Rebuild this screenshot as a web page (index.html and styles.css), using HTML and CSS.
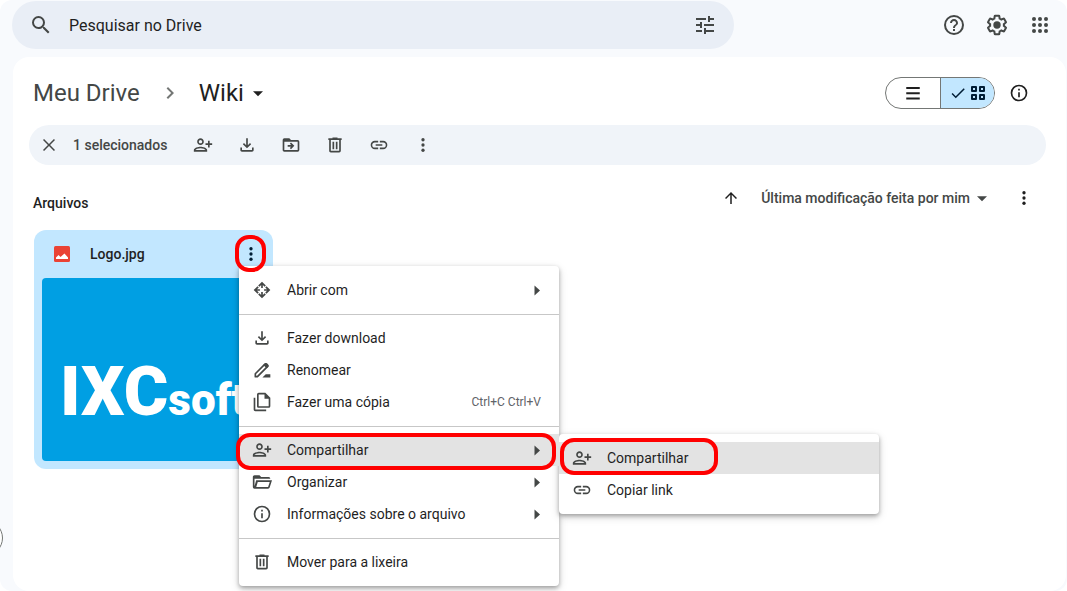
FILE: index.html
```html
<!DOCTYPE html>
<html lang="pt-BR">
<head>
<meta charset="utf-8">
<meta name="viewport" content="width=device-width, initial-scale=1">
<title>Wiki - Google Drive</title>
<link rel="stylesheet" href="styles.css">
</head>
<body>
<svg class="sprite" aria-hidden="true">
  <symbol id="search" viewBox="0 0 24 24"><path d="M15.5 14h-.79l-.28-.27A6.47 6.47 0 0 0 16 9.5 6.5 6.5 0 1 0 9.5 16c1.61 0 3.09-.59 4.23-1.57l.27.28v.79l5 4.99L20.49 19l-4.99-5zm-6 0a4.5 4.5 0 1 1 0-9 4.5 4.5 0 0 1 0 9z"/></symbol>
  <symbol id="tune" viewBox="0 0 24 24"><path d="M3 17v2h6v-2H3zM3 5v2h10V5H3zm10 16v-2h8v-2h-8v-2h-2v6h2zM7 9v2H3v2h4v2h2V9H7zm14 4v-2H11v2h10zm-6-4h2V7h4V5h-4V3h-2v6z"/></symbol>
  <symbol id="help" viewBox="0 0 24 24"><path d="M11 18h2v-2h-2v2zm1-16a10 10 0 1 0 0 20 10 10 0 0 0 0-20zm0 18a8 8 0 1 1 0-16 8 8 0 0 1 0 16zm0-14c-2.21 0-4 1.79-4 4h2c0-1.1.9-2 2-2s2 .9 2 2c0 2-3 1.75-3 5h2c0-2.25 3-2.5 3-5 0-2.21-1.79-4-4-4z"/></symbol>
  <symbol id="gear" viewBox="-1 -1 26 26"><path fill="none" stroke="currentColor" stroke-width="2.2" d="M19.43 12.98c.04-.32.07-.64.07-.98 0-.34-.03-.66-.07-.98l2.11-1.65c.19-.15.24-.42.12-.64l-2-3.46a.5.5 0 0 0-.61-.22l-2.49 1c-.52-.4-1.08-.73-1.69-.98l-.38-2.65C14.46 2.18 14.25 2 14 2h-4c-.25 0-.46.18-.49.42l-.38 2.65c-.61.25-1.17.59-1.69.98l-2.49-1c-.23-.09-.49 0-.61.22l-2 3.46c-.13.22-.07.49.12.64l2.11 1.65c-.04.32-.07.65-.07.98s.03.66.07.98l-2.11 1.65c-.19.15-.24.42-.12.64l2 3.46c.12.22.39.3.61.22l2.49-1c.52.4 1.08.73 1.69.98l.38 2.65c.03.24.24.42.49.42h4c.25 0 .46-.18.49-.42l.38-2.65c.61-.25 1.17-.59 1.69-.98l2.49 1c.23.09.49 0 .61-.22l2-3.46c.12-.22.07-.49-.12-.64l-2.11-1.65z"/><circle cx="12" cy="12" r="4"/></symbol>
  <symbol id="apps" viewBox="0 0 24 24"><circle cx="6" cy="6" r="2"/><circle cx="12" cy="6" r="2"/><circle cx="18" cy="6" r="2"/><circle cx="6" cy="12" r="2"/><circle cx="12" cy="12" r="2"/><circle cx="18" cy="12" r="2"/><circle cx="6" cy="18" r="2"/><circle cx="12" cy="18" r="2"/><circle cx="18" cy="18" r="2"/></symbol>
  <symbol id="chevron" viewBox="0 0 24 24"><path d="M10 6 8.59 7.41 13.17 12l-4.58 4.59L10 18l6-6z"/></symbol>
  <symbol id="caret" viewBox="0 0 24 24"><path d="m6 10 6 6 6-6z"/></symbol>
  <symbol id="side" viewBox="0 0 16 16"><path d="M5.500 3.500v10l5.500-5z"/></symbol>
  <symbol id="list" viewBox="0 0 24 24"><path d="M3 4h18v2.5H3zM3 11h18v2.5H3zM3 18h18v2.5H3z"/></symbol>
  <symbol id="check" viewBox="0 0 24 24"><path d="M9 16.2 4.8 12l-1.4 1.4L9 19 21 7l-1.400-1.400z"/></symbol>
  <symbol id="grid" viewBox="0 0 16 16"><path fill="none" stroke="currentColor" stroke-width="2" stroke-linejoin="round" d="M2 2h4v4H2zM10 2h4v4h-4zM2 10h4v4H2zM10 10h4v4h-4z"/></symbol>
  <symbol id="info" viewBox="0 0 24 24"><path d="M11 7h2v2h-2zm0 4h2v6h-2zm1-9a10 10 0 1 0 0 20 10 10 0 0 0 0-20zm0 18a8 8 0 1 1 0-16 8 8 0 0 1 0 16z"/></symbol>
  <symbol id="close" viewBox="0 0 24 24"><path d="M20 5.400 18.600 4 12 10.600 5.400 4 4 5.400l6.600 6.600L4 18.600 5.400 20l6.600-6.600 6.600 6.600 1.400-1.400-6.600-6.600z"/></symbol>
  <symbol id="person" viewBox="0 0 24 24"><path d="M13 8c0-2.21-1.79-4-4-4S5 5.790 5 8s1.790 4 4 4 4-1.790 4-4zm-2 0c0 1.100-.9 2-2 2s-2-.9-2-2 .9-2 2-2 2 .9 2 2zM1 18v2h16v-2c0-2.660-5.330-4-8-4s-8 1.340-8 4zm2 0c.2-.71 3.300-2 6-2 2.690 0 5.780 1.280 6 2H3zm17-3v-3h3v-2h-3V7h-2v3h-3v2h3v3h2z"/></symbol>
  <symbol id="download" viewBox="0 0 24 24"><path d="m12 16-5-5 1.400-1.450 2.600 2.600V4h2v8.150l2.600-2.600L17 11zM6 20c-1.100 0-2-.9-2-2v-3h2v3h12v-3h2v3c0 1.100-.9 2-2 2z"/></symbol>
  <symbol id="move" viewBox="0 0 24 24"><path d="M20 6h-8l-2-2H4a2 2 0 0 0-2 2v12c0 1.100.9 2 2 2h16a2 2 0 0 0 2-2V8a2 2 0 0 0-2-2zm0 12H4V8h16zM12 17l4-4-4-4-1.400 1.400 1.600 1.600H8v2h4.200l-1.600 1.600z"/></symbol>
  <symbol id="trash" viewBox="0 0 24 24"><path d="M15 4V3H9v1H4v2h1v13c0 1.100.9 2 2 2h10a2 2 0 0 0 2-2V6h1V4zm2 15H7V6h10zM9 8h2v9H9zm4 0h2v9h-2z"/></symbol>
  <symbol id="link" viewBox="0 0 24 24"><path d="M3.900 12c0-1.710 1.390-3.100 3.100-3.100h4V7H7a5 5 0 0 0 0 10h4v-1.900H7A3.100 3.100 0 0 1 3.900 12zM8 13h8v-2H8zm9-6h-4v1.900h4a3.100 3.100 0 0 1 0 6.200h-4V17h4a5 5 0 0 0 0-10z"/></symbol>
  <symbol id="more" viewBox="0 0 24 24"><circle cx="12" cy="5" r="2.200"/><circle cx="12" cy="12" r="2.200"/><circle cx="12" cy="19" r="2.200"/></symbol>
  <symbol id="up" viewBox="0 0 24 24"><path d="m4 12 1.410 1.410L11 7.830V20h2V7.830l5.580 5.590L20 12l-8-8z"/></symbol>
  <symbol id="image" viewBox="0 0 16 16"><rect width="16" height="16" rx="1.500"/><path fill="#fff" d="M2 13v-1.500l2.500-2.500L6.500 11l4-3.500L14 11.500V13z"/></symbol>
  <symbol id="open" viewBox="0 0 24 24"><path d="m12 2 4.600 4.600-1.500 1.500L13 6v3.500h-2V6L8.900 8.100 7.400 6.600zM22 12l-4.600 4.600-1.500-1.500L18 13h-3.500v-2H18l-2.100-2.100 1.500-1.500zM12 22l-4.600-4.600 1.500-1.500L11 18v-3.500h2V18l2.100-2.100 1.500 1.500zM2 12l4.600-4.600 1.500 1.500L6 11h3.500v2H6l2.100 2.100-1.500 1.500z"/></symbol>
  <symbol id="rename" viewBox="0 0 24 24"><path fill="none" stroke="currentColor" stroke-width="2" stroke-linejoin="round" d="M4 20v-3.500L15.500 5a1.500 1.500 0 0 1 2.200 0l.8.800a1.500 1.500 0 0 1 0 2.200L6.500 20z"/><path d="m13.500 6 1.500-1.500a2 2 0 0 1 3 0l1.500 1.500a2 2 0 0 1 0 2.500L17.500 10zM12.500 21l4-4H22v4z"/></symbol>
  <symbol id="copy" viewBox="0 0 24 24"><path d="M16 1H8a2 2 0 0 0-2 2v14c0 1.100.9 2 2 2h12a2 2 0 0 0 2-2V7zm4 16H8V3h7v5h5zM4 7H2v14c0 1.100.9 2 2 2h13v-2H4z"/></symbol>
  <symbol id="folder" viewBox="0 0 24 24"><path d="M3 20a2 2 0 0 1-2-2V6c0-1.100.9-2 2-2h6l2 2h9a2 2 0 0 1 2 2H3v9l2-7h19l-2.800 8.600a2 2 0 0 1-1.900 1.400zm2.100-2h14.200l2-6H6.900z"/></symbol>
</svg>

<div class="app">
  <header class="topbar">
    <form class="search" role="search">
      <svg class="icon24"><use href="#search"/></svg>
      <input class="search-input" type="text" placeholder="Pesquisar no Drive" aria-label="Pesquisar no Drive">
      <button class="btn" type="button" aria-label="Pesquisa avançada"><svg class="icon24"><use href="#tune"/></svg></button>
    </form>
    <div class="top-actions">
      <button class="btn" aria-label="Suporte"><svg class="icon24"><use href="#help"/></svg></button>
      <button class="btn" aria-label="Configurações"><svg class="icon24"><use href="#gear"/></svg></button>
      <button class="btn" aria-label="Google Apps"><svg class="icon24"><use href="#apps"/></svg></button>
    </div>
  </header>

  <button class="edge-button" aria-label="Mostrar painel"></button>

  <main class="panel">
    <div class="title-row">
      <nav class="crumbs" aria-label="Caminho">
        <a class="crumb" href="#">Meu Drive</a>
        <svg class="icon24 crumb-sep"><use href="#chevron"/></svg>
        <button class="crumb-current">Wiki <svg class="icon20"><use href="#caret"/></svg></button>
      </nav>
      <div class="view-tools">
        <div class="toggle">
          <button class="toggle-option" aria-label="Lista" aria-pressed="false"><svg class="icon18"><use href="#list"/></svg></button>
          <button class="toggle-option toggle-on" aria-label="Grade" aria-pressed="true"><svg class="icon18"><use href="#check"/></svg><svg class="icon16"><use href="#grid"/></svg></button>
        </div>
        <button class="btn dark" aria-label="Detalhes"><svg class="icon20"><use href="#info"/></svg></button>
      </div>
    </div>

    <div class="toolbar">
      <button class="btn" aria-label="Limpar seleção"><svg class="icon18"><use href="#close"/></svg></button>
      <span class="selected-count">1 selecionados</span>
      <div class="toolbar-actions">
        <button class="btn" aria-label="Compartilhar"><svg class="icon20"><use href="#person"/></svg></button>
        <button class="btn" aria-label="Fazer download"><svg class="icon20"><use href="#download"/></svg></button>
        <button class="btn" aria-label="Mover"><svg class="icon20"><use href="#move"/></svg></button>
        <button class="btn" aria-label="Mover para a lixeira"><svg class="icon20"><use href="#trash"/></svg></button>
        <button class="btn" aria-label="Copiar link"><svg class="icon20"><use href="#link"/></svg></button>
        <button class="btn" aria-label="Mais ações"><svg class="icon18"><use href="#more"/></svg></button>
      </div>
    </div>

    <div class="files-head">
      <h2 class="files-title">Arquivos</h2>
      <div class="sort">
        <button class="btn dark" aria-label="Inverter ordem"><svg class="icon18"><use href="#up"/></svg></button>
        <button class="sort-by">Última modificação feita por mim <svg class="icon20"><use href="#caret"/></svg></button>
        <button class="btn dark" aria-label="Opções de classificação"><svg class="icon18"><use href="#more"/></svg></button>
      </div>
    </div>

    <div class="files">
      <article class="card">
        <div class="card-head">
          <svg class="icon16 image-icon"><use href="#image"/></svg>
          <h3 class="card-name">Logo.jpg</h3>
          <button class="btn card-more marked" aria-label="Mais ações" aria-expanded="true"><svg class="icon18"><use href="#more"/></svg></button>
        </div>
        <div class="thumb"><div class="logo"><span class="logo-main">IXC</span><span class="logo-sub">soft</span></div></div>

        <ul class="menu" role="menu">
          <li><button class="item" role="menuitem"><svg class="icon20"><use href="#open"/></svg><span class="item-label">Abrir com</span><svg class="icon16"><use href="#side"/></svg></button></li>
          <li class="divider" role="separator"></li>
          <li><button class="item" role="menuitem"><svg class="icon20"><use href="#download"/></svg><span class="item-label">Fazer download</span></button></li>
          <li><button class="item" role="menuitem"><svg class="icon20"><use href="#rename"/></svg><span class="item-label">Renomear</span></button></li>
          <li><button class="item" role="menuitem"><svg class="icon20"><use href="#copy"/></svg><span class="item-label">Fazer uma cópia</span><span class="shortcut">Ctrl+C Ctrl+V</span></button></li>
          <li class="divider" role="separator"></li>
          <li class="has-submenu">
            <button class="item active marked mark-wide" role="menuitem" aria-expanded="true"><svg class="icon20"><use href="#person"/></svg><span class="item-label">Compartilhar</span><svg class="icon16"><use href="#side"/></svg></button>
            <ul class="menu submenu" role="menu">
              <li><button class="item active marked mark-half" role="menuitem"><svg class="icon20"><use href="#person"/></svg><span class="item-label">Compartilhar</span></button></li>
              <li><button class="item" role="menuitem"><svg class="icon20"><use href="#link"/></svg><span class="item-label">Copiar link</span></button></li>
            </ul>
          </li>
          <li><button class="item" role="menuitem"><svg class="icon20"><use href="#folder"/></svg><span class="item-label">Organizar</span><svg class="icon16"><use href="#side"/></svg></button></li>
          <li><button class="item" role="menuitem"><svg class="icon20"><use href="#info"/></svg><span class="item-label">Informações sobre o arquivo</span><svg class="icon16"><use href="#side"/></svg></button></li>
          <li class="divider" role="separator"></li>
          <li><button class="item" role="menuitem"><svg class="icon20"><use href="#trash"/></svg><span class="item-label">Mover para a lixeira</span></button></li>
        </ul>
      </article>
    </div>
  </main>
</div>
</body>
</html>
```
FILE: styles.css
```css
*, *::after { box-sizing: border-box; }

body {
  margin: 0;
  background: #fff;
  color: #1f1f1f;
  font: 14px/20px Roboto, "Liberation Sans", sans-serif;
}

button, input { font: inherit; color: inherit; border: 0; background: none; padding: 0; }
h2, h3, ul { margin: 0; padding: 0; font: inherit; list-style: none; }
svg { fill: currentColor; flex: none; display: block; }

.sprite { position: absolute; width: 0; height: 0; }
.icon16 { width: 16px; height: 16px; }
.icon18 { width: 18px; height: 18px; }
.icon20 { width: 20px; height: 20px; }
.icon24 { width: 24px; height: 24px; }

.app {
  position: relative;
  display: flex;
  flex-direction: column;
  min-height: 100vh;
  padding: 1px 1px 0 13px;
  background: #f8fafd;
  border-radius: 12px;
  overflow: hidden;
}

.btn {
  display: grid;
  place-items: center;
  flex: none;
  width: 32px;
  height: 32px;
  color: #444746;
}
.dark { color: #1f1f1f; }

.topbar {
  display: flex;
  justify-content: space-between;
  gap: 24px;
  margin: 0 10px 8px -1px;
}
.search {
  display: flex;
  align-items: center;
  flex: 0 1 722px;
  height: 48px;
  padding: 0 13px 0 17px;
  border-radius: 24px;
  background: #e9eef6;
  color: #444746;
}
.search-input {
  flex: 1;
  min-width: 0;
  margin-left: 16px;
  padding-top: 2px;
  font-size: 16px;
  outline: 0;
}
.search-input::placeholder { color: #1f1f1f; opacity: 1; }
.top-actions { display: flex; align-items: center; gap: 11px; }

.edge-button {
  position: absolute;
  left: -33px;
  top: 520px;
  width: 36px;
  height: 36px;
  border: 1px solid #747775;
  border-radius: 50%;
  background: #fff;
}

.panel {
  flex: 1;
  padding: 16px 20px 0 16px;
  border-radius: 16px;
  background: #fff;
}

.title-row {
  display: flex;
  align-items: center;
  justify-content: space-between;
  height: 40px;
  margin-bottom: 12px;
  padding-left: 4px;
}
.crumbs { display: flex; align-items: center; font-size: 24px; line-height: 32px; }
.crumb { color: #444746; text-decoration: none; }
.crumb-sep { margin: 0 17px 0 18px; color: #747775; }
.crumb-current { display: flex; align-items: center; gap: 4px; }
.view-tools { display: flex; align-items: center; gap: 8px; padding-right: 11px; }
.toggle {
  display: grid;
  grid-template-columns: 1fr 1fr;
  width: 110px;
  height: 32px;
  border: 1px solid #747775;
  border-radius: 16px;
  overflow: hidden;
}
.toggle-option { display: flex; align-items: center; justify-content: center; gap: 3px; }
.toggle-on { border-left: 1px solid #747775; background: #c2e7ff; color: #001d35; }

.toolbar {
  display: flex;
  align-items: center;
  gap: 8px;
  height: 40px;
  margin-bottom: 17px;
  padding-left: 4px;
  border-radius: 20px;
  background: #f0f4f9;
}
.selected-count { min-width: 106px; font-weight: 500; color: #444746; }
.toolbar-actions { display: flex; gap: 12px; }

.files-head {
  display: flex;
  align-items: flex-end;
  justify-content: space-between;
  margin-bottom: 16px;
  padding: 0 6px 0 4px;
}
.files-title { font-weight: 500; line-height: 22px; }
.sort { display: flex; align-items: center; }
.sort-by {
  display: flex;
  align-items: center;
  gap: 2px;
  margin: 0 16px 0 14px;
  font-weight: 500;
  color: #444746;
}

.files {
  display: grid;
  grid-template-columns: repeat(auto-fill, minmax(232px, 1fr));
  gap: 16px;
  padding: 0 8px 0 5px;
}
.card {
  position: relative;
  padding: 8px;
  border-radius: 12px;
  background: #c2e7ff;
}
.card-head {
  display: flex;
  align-items: center;
  height: 32px;
  margin-bottom: 8px;
  padding: 0 0 0 12px;
}
.image-icon { color: #ea4335; }
.card-name { flex: 1; margin-left: 20px; font-weight: 500; }
.card-more { width: 28px; color: #001d35; }
.thumb {
  display: flex;
  align-items: center;
  height: 183px;
  padding: 52px 0 0 18px;
  border-radius: 4px;
  background: #009fe3;
  overflow: hidden;
}
.logo { display: flex; align-items: baseline; color: #fff; font-weight: 900; line-height: 72px; }
.logo-main { font-size: 68px; }
.logo-sub { font-size: 44px; }

.menu {
  position: absolute;
  z-index: 1;
  top: 36px;
  left: 205px;
  width: 320px;
  padding: 8px 0;
  border-radius: 4px;
  background: #fff;
  box-shadow: 0 2px 4px rgba(0, 0, 0, .3), 0 3px 10px rgba(0, 0, 0, .15);
}
.has-submenu { position: relative; }
.submenu { top: 0; left: 100%; }
.divider { height: 1px; margin: 8px 0 7px; background: #c7c7c7; }
.item {
  display: flex;
  align-items: center;
  width: 100%;
  height: 32px;
  padding: 0 14px 0 13px;
  text-align: left;
}
.item svg { color: #444746; }
.item-label { flex: 1; margin-left: 15px; }
.shortcut { padding-right: 4px; font-size: 12px; color: #5f6368; }
.active { background: #e3e3e3; }

.marked { position: relative; z-index: 2; }
.marked::after {
  content: "";
  position: absolute;
  inset: -3px -1px -2px -2px;
  border: 4px solid #f00;
  border-radius: 14px;
}
.mark-wide::after { inset: -1px 3px -4px -3px; }
.mark-half::after { inset: -4px auto -1px 1px; width: 158px; }
```
